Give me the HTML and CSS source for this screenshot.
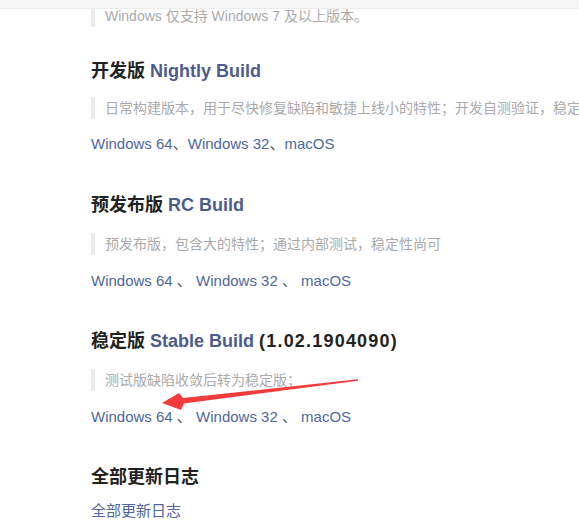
FILE: index.html
```html
<!DOCTYPE html>
<html lang="zh-CN">
  <head>
    <meta charset="UTF-8" />
    <meta name="viewport" content="width=device-width, initial-scale=1.0" />
    <title>版本下载</title>
    <link rel="stylesheet" href="styles.css">
  </head>
  <body>
    <div class="top-bar"></div>

    <div class="content">
      <blockquote class="note note-first">Windows 仅支持 Windows 7 及以上版本。</blockquote>

      <div class="build build-first">
        <h3 class="build-title">开发版 <a class="title-link" href="">Nightly Build</a></h3>
        <blockquote class="note">日常构建版本，用于尽快修复缺陷和敏捷上线小的特性；开发自测验证，稳定性较差</blockquote>
        <p class="downloads"><a href="">Windows 64</a>、<a href="">Windows 32</a>、<a href="">macOS</a></p>
      </div>

      <div class="build">
        <h3 class="build-title">预发布版 <a class="title-link" href="">RC Build</a></h3>
        <blockquote class="note">预发布版，包含大的特性；通过内部测试，稳定性尚可</blockquote>
        <p class="downloads"><a href="">Windows 64</a> 、 <a href="">Windows 32</a> 、 <a href="">macOS</a></p>
      </div>

      <div class="build">
        <h3 class="build-title">稳定版 <a class="title-link" href="">Stable Build</a> <span class="version">(1.02.1904090)</span></h3>
        <blockquote class="note">测试版缺陷收敛后转为稳定版；</blockquote>
        <p class="downloads"><a href="">Windows 64</a> 、 <a href="">Windows 32</a> 、 <a href="">macOS</a></p>
      </div>

      <div class="build build-log">
        <h3 class="build-title">全部更新日志</h3>
        <p class="downloads"><a href="">全部更新日志</a></p>
      </div>
    </div>

    <!-- 截图上的标注箭头 -->
    <svg class="mark-arrow" width="579" height="528" viewBox="0 0 579 528">
      <polygon points="162,403 179,393 183,398 358,379.3 358,380.7 184,403.5 181,410" fill="#f23b3b" />
    </svg>
  </body>
</html>
```

FILE: styles.css
```css
html, body {
  overflow: hidden;
}

body {
  margin: 0;
  background-color: #fff;
  font-family: "Liberation Sans", "Noto Sans CJK SC", sans-serif;
  color: #222;
}

.top-bar {
  position: fixed;
  top: 0;
  left: 0;
  width: 100%;
  height: 8px;
  background-color: #f5f5f5;
  border-bottom: 1px solid #ececec;
  z-index: 2;
}

.content {
  padding: 5px 0 0 91px;
  overflow: hidden;
}

.note {
  margin: 0 0 14px 0;
  padding: 0 0 0 10px;
  border-left: 4px solid #ebebeb;
  color: #aaa;
  font-size: 14px;
  line-height: 22px;
  white-space: nowrap;
}

.note-first {
  margin-bottom: 31px;
}

.build-title {
  margin: 0 0 15px 0;
  font-size: 18px;
  line-height: 26px;
  font-weight: bold;
  color: #222;
}

.title-link {
  color: #4d5c8f;
  text-decoration: none;
}

.version {
  letter-spacing: 1.2px;
}

.downloads {
  margin: 0 0 35px 0;
  font-size: 15px;
  line-height: 24px;
  color: #555;
}

.downloads a {
  color: #5066a0;
  text-decoration: none;
}

/* 第一段间距略小 */
.build-first .build-title,
.build-first .note {
  margin-bottom: 13px;
}

.build-first .downloads {
  margin-bottom: 36px;
}

.build-log .build-title {
  margin-bottom: 9px;
}

.mark-arrow {
  position: absolute;
  top: 0;
  left: 0;
  pointer-events: none;
}
```
